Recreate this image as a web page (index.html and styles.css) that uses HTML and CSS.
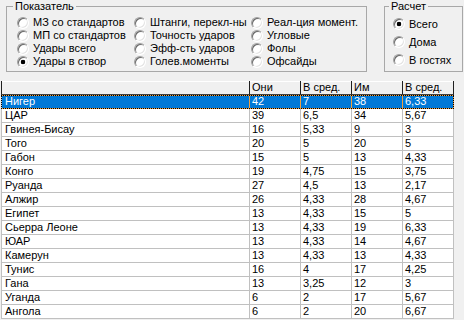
FILE: index.html
```html
<!DOCTYPE html>
<html lang="ru">
<head>
    <meta charset="UTF-8">
    <title>Статистика</title>
    <link rel="stylesheet" href="styles.css">
</head>
<body>
    <div class="options">
        <fieldset class="group group-stat">
            <legend>Показатель</legend>
            <div class="choices">
                <label class="opt"><input type="radio" name="stat">МЗ со стандартов</label>
                <label class="opt"><input type="radio" name="stat">МП со стандартов</label>
                <label class="opt"><input type="radio" name="stat">Удары всего</label>
                <label class="opt"><input type="radio" name="stat" checked>Удары в створ</label>
                <label class="opt"><input type="radio" name="stat">Штанги, перекл-ны</label>
                <label class="opt"><input type="radio" name="stat">Точность ударов</label>
                <label class="opt"><input type="radio" name="stat">Эфф-сть ударов</label>
                <label class="opt"><input type="radio" name="stat">Голев.моменты</label>
                <label class="opt"><input type="radio" name="stat">Реал-ция момент.</label>
                <label class="opt"><input type="radio" name="stat">Угловые</label>
                <label class="opt"><input type="radio" name="stat">Фолы</label>
                <label class="opt"><input type="radio" name="stat">Офсайды</label>
            </div>
        </fieldset>
        <fieldset class="group group-calc">
            <legend>Расчет</legend>
            <div class="choices-col">
                <label class="opt"><input type="radio" name="calc" checked>Всего</label>
                <label class="opt"><input type="radio" name="calc">Дома</label>
                <label class="opt"><input type="radio" name="calc">В гостях</label>
            </div>
        </fieldset>
    </div>

    <table class="grid">
        <thead>
            <tr><th class="name"></th><th>Они</th><th>В сред.</th><th>Им</th><th>В сред.</th></tr>
        </thead>
        <tbody>
            <tr class="selected"><td class="name">Нигер</td><td>42</td><td>7</td><td>38</td><td>6,33</td></tr>
            <tr><td class="name">ЦАР</td><td>39</td><td>6,5</td><td>34</td><td>5,67</td></tr>
            <tr><td class="name">Гвинея-Бисау</td><td>16</td><td>5,33</td><td>9</td><td>3</td></tr>
            <tr><td class="name">Того</td><td>20</td><td>5</td><td>20</td><td>5</td></tr>
            <tr><td class="name">Габон</td><td>15</td><td>5</td><td>13</td><td>4,33</td></tr>
            <tr><td class="name">Конго</td><td>19</td><td>4,75</td><td>15</td><td>3,75</td></tr>
            <tr><td class="name">Руанда</td><td>27</td><td>4,5</td><td>13</td><td>2,17</td></tr>
            <tr><td class="name">Алжир</td><td>26</td><td>4,33</td><td>28</td><td>4,67</td></tr>
            <tr><td class="name">Египет</td><td>13</td><td>4,33</td><td>15</td><td>5</td></tr>
            <tr><td class="name">Сьерра Леоне</td><td>13</td><td>4,33</td><td>19</td><td>6,33</td></tr>
            <tr><td class="name">ЮАР</td><td>13</td><td>4,33</td><td>14</td><td>4,67</td></tr>
            <tr><td class="name">Камерун</td><td>13</td><td>4,33</td><td>13</td><td>4,33</td></tr>
            <tr><td class="name">Тунис</td><td>16</td><td>4</td><td>17</td><td>4,25</td></tr>
            <tr><td class="name">Гана</td><td>13</td><td>3,25</td><td>12</td><td>3</td></tr>
            <tr><td class="name">Уганда</td><td>6</td><td>2</td><td>17</td><td>5,67</td></tr>
            <tr><td class="name">Ангола</td><td>6</td><td>2</td><td>20</td><td>6,67</td></tr>
        </tbody>
    </table>
</body>
</html>
```

FILE: styles.css
```css
body {
    margin: 0;
    background-color: #F0F0F0;
    color: #000000;
    font-family: 'Liberation Sans', Arial, sans-serif;
    font-size: 11px;
    line-height: 13px;
    overflow: hidden;
}

/* Option groups */
.options {
    display: flex;
    align-items: flex-start;
    padding-left: 6px;
}

.group {
    margin: 0;
    padding: 0;
    border: 1px solid #A8A8A8;
    min-width: 0;
    box-sizing: border-box;
    height: 72px;
}

.group legend {
    padding: 0 2px;
    line-height: 13px;
}

.group-stat {
    width: 361px;
}

.group-stat legend {
    margin-left: 6px;
}

.group-calc {
    width: 79px;
    margin-left: 17px;
}

.group-calc legend {
    margin-left: 4px;
}

.choices {
    display: grid;
    grid-template-columns: repeat(3, 117px);
    grid-template-rows: repeat(4, 13px);
    grid-auto-flow: column;
    margin-top: 3px;
    padding-left: 10px;
}

.choices-col {
    display: grid;
    grid-template-rows: repeat(3, 18px);
    margin-top: 2px;
    padding-left: 8px;
}

.opt {
    display: flex;
    align-items: center;
    white-space: nowrap;
    overflow: hidden;
}

.opt input {
    appearance: none;
    -webkit-appearance: none;
    flex: none;
    width: 12px;
    height: 12px;
    margin: 0 4px 0 0;
    border: 1px solid;
    border-color: #A0A0A0 #FFFFFF #FFFFFF #A0A0A0;
    border-radius: 50%;
    background-color: #FFFFFF;
    box-shadow: inset 1px 1px 0 #696969, inset -1px -1px 0 #E3E3E3;
}

.opt input:checked {
    background: radial-gradient(circle, #000000 0 2px, #FFFFFF 2.6px);
}

/* Results grid */
.grid {
    margin: 9px 0 0 1px;
    border-collapse: separate;
    border-spacing: 0;
    table-layout: fixed;
    width: 453px;
}

.grid th,
.grid td {
    box-sizing: border-box;
    width: 51px;
    padding: 0 0 0 2px;
    text-align: left;
    font-weight: normal;
    white-space: nowrap;
    overflow: hidden;
    border-right: 1px solid #C0C0C0;
    border-bottom: 1px solid #C0C0C0;
    background-color: #FFFFFF;
}

.grid th {
    height: 13px;
    background-color: #F0F0F0;
    border-right-color: #202020;
    border-bottom-color: #404040;
    box-shadow: inset 0 1px 0 #FFFFFF;
}

.grid td {
    height: 14px;
}

.grid .name {
    width: 249px;
    padding-left: 3px;
    border-left: 1px solid #C0C0C0;
}

.grid th.name {
    border-left-color: #202020;
}

.grid tr.selected td {
    background-color: #0078D7;
    color: #FFFFFF;
    border-right-color: #F0A040;
    border-bottom-color: #F0A040;
    box-shadow: inset 0 1px 0 #F0A040;
}

.grid tr.selected {
    outline: 1px dotted #000000;
    outline-offset: -1px;
}
```
